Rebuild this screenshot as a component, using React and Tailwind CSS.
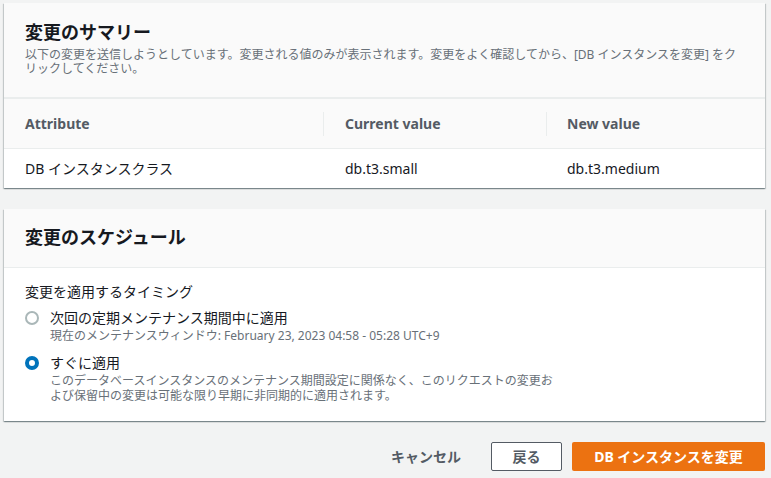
import React, { useState } from 'react';

const cardShadow =
  'shadow-[0_1px_1px_0_rgba(0,28,36,0.3),1px_1px_1px_0_rgba(0,28,36,0.15),-1px_1px_1px_0_rgba(0,28,36,0.15)]';

function Radio({ checked }) {
  if (checked) {
    return (
      <span className="mt-[3px] block h-[14px] w-[14px] shrink-0 rounded-full border-[4px] border-[#0073bb] bg-white" />
    );
  }
  return (
    <span className="mt-[3px] block h-[14px] w-[14px] shrink-0 rounded-full border-2 border-[#aab7b8] bg-white" />
  );
}

function Option({ checked, label, children, onClick }) {
  return (
    <div className="flex cursor-pointer gap-[11px]" onClick={onClick}>
      <Radio checked={checked} />
      <div>
        <div className="text-[14px] leading-[20px] text-[#16191f]">{label}</div>
        <div className="text-[12px] leading-[15px] text-[#687078]">{children}</div>
      </div>
    </div>
  );
}

export default function App() {
  const [timing, setTiming] = useState('now');

  return (
    <div
      className="min-h-screen bg-[#f2f3f3] pt-[3px] pl-[4px] pr-[6px]"
      style={{ fontFamily: '"Noto Sans", "Noto Sans CJK JP", sans-serif' }}
    >
      {/* summary */}
      <section className={`bg-white ${cardShadow}`}>
        <div className="border-b-2 border-[#eaeded] bg-[#fafafa] pl-[21px] pr-[20px] pt-[18px] pb-[21px]">
          <h2 className="text-[18px] font-bold leading-[22px] text-[#16191f]">変更のサマリー</h2>
          <p className="mt-[5px] text-[12px] leading-[14px] text-[#687078]">
            以下の変更を送信しようとしています。変更される値のみが表示されます。変更をよく確認してから、[DB インスタンスを変更] をク
            <br />
            リックしてください。
          </p>
        </div>
        <div className="grid grid-cols-[319px_223px_1fr]">
          <div className="flex h-[50px] items-center border-b border-[#eaeded] bg-[#fafafa] pl-[21px] text-[14px] font-bold text-[#545b64]">
            Attribute
          </div>
          <div className="flex h-[50px] items-center border-b border-[#eaeded] bg-[#fafafa] text-[14px] font-bold text-[#545b64]">
            <span className="mr-[21px] h-[24px] w-px bg-[#eaeded]" />
            Current value
          </div>
          <div className="flex h-[50px] items-center border-b border-[#eaeded] bg-[#fafafa] text-[14px] font-bold text-[#545b64]">
            <span className="mr-[20px] h-[24px] w-px bg-[#eaeded]" />
            New value
          </div>
          <div className="flex h-[39px] items-center pl-[21px] text-[14px] text-[#16191f]">DB インスタンスクラス</div>
          <div className="flex h-[39px] items-center pl-[22px] text-[14px] text-[#16191f]">db.t3.small</div>
          <div className="flex h-[39px] items-center pl-[21px] text-[14px] text-[#16191f]">db.t3.medium</div>
        </div>
      </section>

      {/* schedule */}
      <section className={`mt-[21px] bg-white ${cardShadow}`}>
        <div className="border-b border-[#eaeded] bg-[#fafafa] pl-[21px] pr-[20px] pt-[17px] pb-[19px]">
          <h2 className="text-[18px] font-bold leading-[22px] text-[#16191f]">変更のスケジュール</h2>
        </div>
        <div className="pl-[21px] pr-[20px] pt-[14px] pb-[18px]">
          <div className="text-[14px] leading-[20px] text-[#16191f]">変更を適用するタイミング</div>
          <div className="mt-[6px]">
            <Option
              checked={timing === 'window'}
              label="次回の定期メンテナンス期間中に適用"
              onClick={() => setTiming('window')}
            >
              <span className="leading-[14px]">現在のメンテナンスウィンドウ: February 23, 2023 04:58 - 05:28 UTC+9</span>
            </Option>
          </div>
          <div className="mt-[10px]">
            <Option checked={timing === 'now'} label="すぐに適用" onClick={() => setTiming('now')}>
              このデータベースインスタンスのメンテナンス期間設定に関係なく、このリクエストの変更お
              <br />
              よび保留中の変更は可能な限り早期に非同期的に適用されます。
            </Option>
          </div>
        </div>
      </section>

      {/* actions */}
      <div className="mt-[21px] flex justify-end gap-[10px]">
        <button className="h-[29px] px-5 text-[14px] font-bold text-[#545b64]">キャンセル</button>
        <button className="h-[29px] w-[71px] rounded-[2px] border border-[#545b64] bg-white text-[14px] font-bold text-[#545b64]">
          戻る
        </button>
        <button className="h-[29px] w-[193px] rounded-[2px] bg-[#ec7211] text-[14px] font-bold text-white">
          DB インスタンスを変更
        </button>
      </div>
    </div>
  );
}
